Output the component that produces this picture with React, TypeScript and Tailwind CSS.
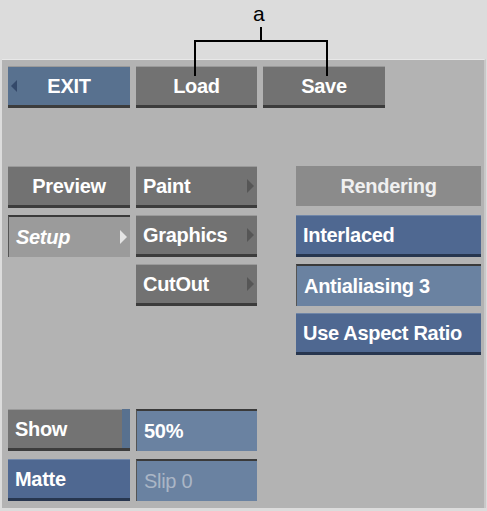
const font = { fontFamily: '"Liberation Sans", Arial, sans-serif' };

function Btn({
  label,
  className = "",
  align = "center",
  italic = false,
  arrow,
  inset = false,
  textClass = "text-white",
}: {
  label: string;
  className?: string;
  align?: "center" | "left";
  italic?: boolean;
  arrow?: "left" | "right" | "rightLight";
  inset?: boolean;
  textClass?: string;
}) {
  return (
    <div
      className={`relative flex items-center h-[42px] text-[20px] font-bold tracking-[-0.3px] ${
        inset
          ? "border-t-2 border-l border-t-[#3a3a3a] border-l-[#555]"
          : "border-t border-t-[#9a9a9a] border-b-[3px] border-b-[#3c3c3c]"
      } ${align === "center" ? "justify-center" : "justify-start pl-[7px]"} ${className}`}
    >
      {arrow === "left" && (
        <span className="absolute left-[3px] top-1/2 -translate-y-1/2 w-0 h-0 border-y-[6px] border-y-transparent border-r-[6px] border-r-[#34496a]" />
      )}
      {arrow === "right" && (
        <span className="absolute right-[3px] top-1/2 -translate-y-1/2 w-0 h-0 border-y-[7px] border-y-transparent border-l-[7px] border-l-[#565656]" />
      )}
      {arrow === "rightLight" && (
        <span className="absolute right-[3px] top-1/2 -translate-y-1/2 w-0 h-0 border-y-[7px] border-y-transparent border-l-[7px] border-l-[#e4e4e4]" />
      )}
      <span className={`${textClass} ${italic ? "italic" : ""}`}>{label}</span>
    </div>
  );
}

export default function App() {
  return (
    <div className="relative w-[487px] h-[511px] bg-[#dcdcdc] overflow-hidden" style={font}>
      {/* callout */}
      <div className="absolute left-[253px] top-[3px] text-[21px] leading-none text-black" style={font}>
        a
      </div>
      <div className="absolute left-[260px] top-[27px] w-[2px] h-[15px] bg-black" />
      <div className="absolute left-[194px] top-[40px] w-[134px] h-[2px] bg-black z-10" />
      <div className="absolute left-[194px] top-[40px] w-[2px] h-[36px] bg-black z-10" />
      <div className="absolute left-[326px] top-[40px] w-[2px] h-[36px] bg-black z-10" />

      <div className="mt-[59px] ml-[2px] w-[484px] h-[449px] bg-[#b3b3b3] border-t border-t-[#e8e8e8] border-r-2 border-r-[#c8c8c8] pl-[6px] pt-[6px]">
        <div className="flex gap-[6px]">
          <Btn label="EXIT" arrow="left" className="w-[122px] bg-[#58718f] border-t-[#7a8fab] border-b-[#2f3f57]" />
          <Btn label="Load" className="w-[121px] bg-[#727272]" />
          <Btn label="Save" className="w-[122px] bg-[#727272]" />
        </div>

        <div className="flex mt-[58px]">
          <div className="flex flex-col gap-[7px] w-[122px]">
            <Btn label="Preview" className="bg-[#727272]" />
            <Btn label="Setup" align="left" italic arrow="rightLight" inset className="bg-[#9b9b9b] h-[41px]" />
          </div>
          <div className="flex flex-col gap-[7px] w-[121px] ml-[6px]">
            <Btn label="Paint" align="left" arrow="right" className="bg-[#727272]" />
            <Btn label="Graphics" align="left" arrow="right" className="bg-[#727272]" />
            <Btn label="CutOut" align="left" arrow="right" className="bg-[#727272]" />
          </div>
          <div className="flex flex-col gap-[7px] w-[185px] ml-[39px]">
            <div className="flex items-center justify-center h-[40px] bg-[#8b8b8b] text-[20px] font-bold tracking-[-0.3px] text-[#f0f0f0] mb-[2px]">
              Rendering
            </div>
            <Btn label="Interlaced" align="left" className="bg-[#4f6891] border-t-[#7086a8] border-b-[#27364f]" />
            <Btn label="Antialiasing 3" align="left" inset className="bg-[#6a82a1]" />
            <Btn label="Use Aspect Ratio" align="left" className="bg-[#4f6891] border-t-[#7086a8] border-b-[#27364f]" />
          </div>
        </div>

        <div className="flex gap-[6px] mt-[54px]">
          <div className="relative w-[122px]">
            <Btn label="Show" align="left" className="bg-[#737373] border-b-[#2f3f57]" />
            <div className="absolute right-0 top-0 w-[8px] h-[39px] bg-[#58718f]" />
          </div>
          <Btn label="50%" align="left" inset className="w-[121px] bg-[#6a82a1]" />
        </div>
        <div className="flex gap-[6px] mt-[8px]">
          <Btn label="Matte" align="left" className="w-[122px] bg-[#4f6891] border-t-[#7086a8] border-b-[#27364f]" />
          <Btn label="Slip 0" align="left" inset textClass="text-[#aab6c6] font-normal" className="w-[121px] bg-[#6a82a1]" />
        </div>
      </div>
    </div>
  );
}
